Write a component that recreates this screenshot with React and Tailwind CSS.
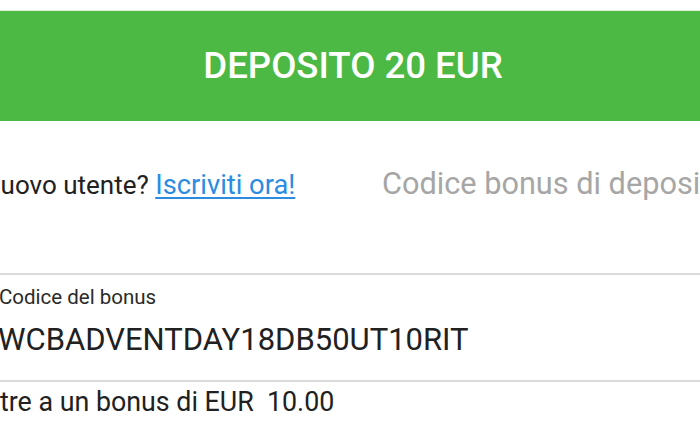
import React from 'react';

const App = () => {
  return (
    <div className="w-[700px] h-[441px] overflow-hidden bg-white text-[#212121] font-['Roboto',_'Liberation_Sans',_sans-serif]">
      <div className="pt-[10px]">
        <div className="h-[1px] bg-[#dff0dd]" />
        <div className="h-[110px] bg-[#4bb943] flex items-center justify-center pl-[6px]">
          <span className="text-white text-[36.6px] font-medium leading-none">DEPOSITO 20 EUR</span>
        </div>
      </div>

      <div className="h-[152px] pt-[48px] flex items-baseline whitespace-nowrap">
        <div className="w-[382px] shrink-0">
          <span className="-ml-[18px] inline-block text-[26px] leading-[30px]">
            Nuovo utente?{' '}
            <a href="#" className="text-[27.3px] text-[#2b8ce2] underline underline-offset-[3px] decoration-[2px]">Iscriviti ora!</a>
          </span>
        </div>
        <div className="text-[30.7px] leading-[30px] text-[#a6a6a6]">Codice bonus di deposito</div>
      </div>

      <div className="border-t-2 border-[#dadada]">
        <div className="pt-[10px] text-[20.5px] leading-[24px] text-[#2a2a2a] -ml-[1px] whitespace-nowrap">Codice del bonus</div>
        <div className="mt-[13px] text-[31px] leading-[36px] -ml-[2px] whitespace-nowrap">WCBADVENTDAY18DB50UT10RIT</div>
        <div className="h-[22px]" />
      </div>

      <div className="border-t-2 border-[#dadada]">
        <div className="pt-[5px] text-[26.8px] leading-[30px] whitespace-pre">tre a un bonus di EUR  10.00</div>
      </div>
    </div>
  );
};

export default App;
